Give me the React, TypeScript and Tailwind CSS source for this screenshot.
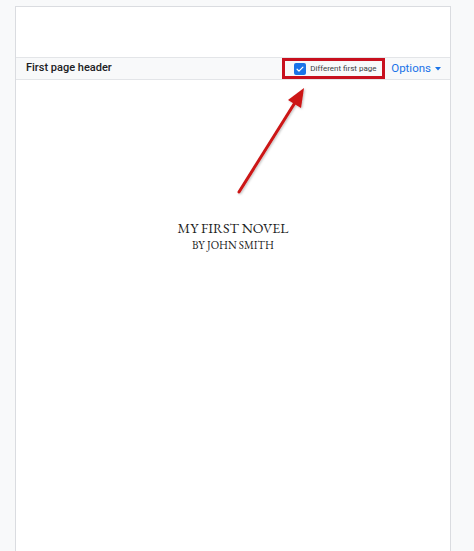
import React from "react";

function Arrow() {
  // tail near the title, head pointing at the checkbox
  return (
    <svg
      className="pointer-events-none absolute left-0 top-0"
      width="474"
      height="551"
      viewBox="0 0 474 551"
    >
      <defs>
        <filter id="arrowShadow" x="-20%" y="-20%" width="140%" height="140%">
          <feDropShadow dx="1" dy="1" stdDeviation="1" floodColor="#000" floodOpacity="0.25" />
        </filter>
      </defs>
      <g filter="url(#arrowShadow)">
        <line x1="239" y1="192" x2="296" y2="101" stroke="#cc1414" strokeWidth="3" strokeLinecap="round" />
        <polygon points="304,88 288,100 301,108" fill="#cc1414" />
      </g>
    </svg>
  );
}

export default function App() {
  return (
    <div className="relative h-[551px] w-[474px] overflow-hidden bg-[#f8f9fa] pl-[15px] pr-[23px] pt-[6px]">
      <div className="flex h-[560px] flex-col border-x border-t border-[#dadce0] bg-white">
        <div className="h-[50px]" />

        {/* Header options bar */}
        <div
          className="flex h-[23px] items-center border-y border-[#e3e5e8] bg-[#f8f9fa] pl-[10px] pr-[9px]"
          style={{ fontFamily: "Roboto, 'Liberation Sans', sans-serif" }}
        >
          <span className="text-[11px] font-medium text-[#202124]">First page header</span>
          <div className="ml-auto flex items-center">
            <div className="flex h-[21px] w-[103px] items-center border-[3px] border-[#c8101e] pl-[9px]">
              <span className="flex h-[12px] w-[12px] items-center justify-center rounded-[2px] bg-[#1a73e8]">
                <svg width="10" height="10" viewBox="0 0 24 24" fill="none">
                  <path d="M5 12.5l4.5 4.5L19 7.5" stroke="white" strokeWidth="3" strokeLinecap="round" strokeLinejoin="round" />
                </svg>
              </span>
              <span className="ml-[4px] whitespace-nowrap text-[8px] text-[#3c4043]">Different first page</span>
            </div>
            <div className="ml-[6px] flex items-center text-[11.5px] text-[#1a73e8]">
              <span>Options</span>
              <svg className="ml-[4px]" width="6" height="4" viewBox="0 0 6 4">
                <path d="M0 0h6L3 3.5z" fill="#1a73e8" />
              </svg>
            </div>
          </div>
        </div>

        {/* Page body */}
        <div
          className="flex flex-col items-center pt-[139px] text-[#222]"
          style={{ fontFamily: "'EB Garamond', 'Liberation Serif', serif" }}
        >
          <div className="text-[14px] leading-[18px]">MY FIRST NOVEL</div>
          <div className="text-[11px] leading-[16px]">BY JOHN SMITH</div>
        </div>
      </div>
      <Arrow />
    </div>
  );
}
